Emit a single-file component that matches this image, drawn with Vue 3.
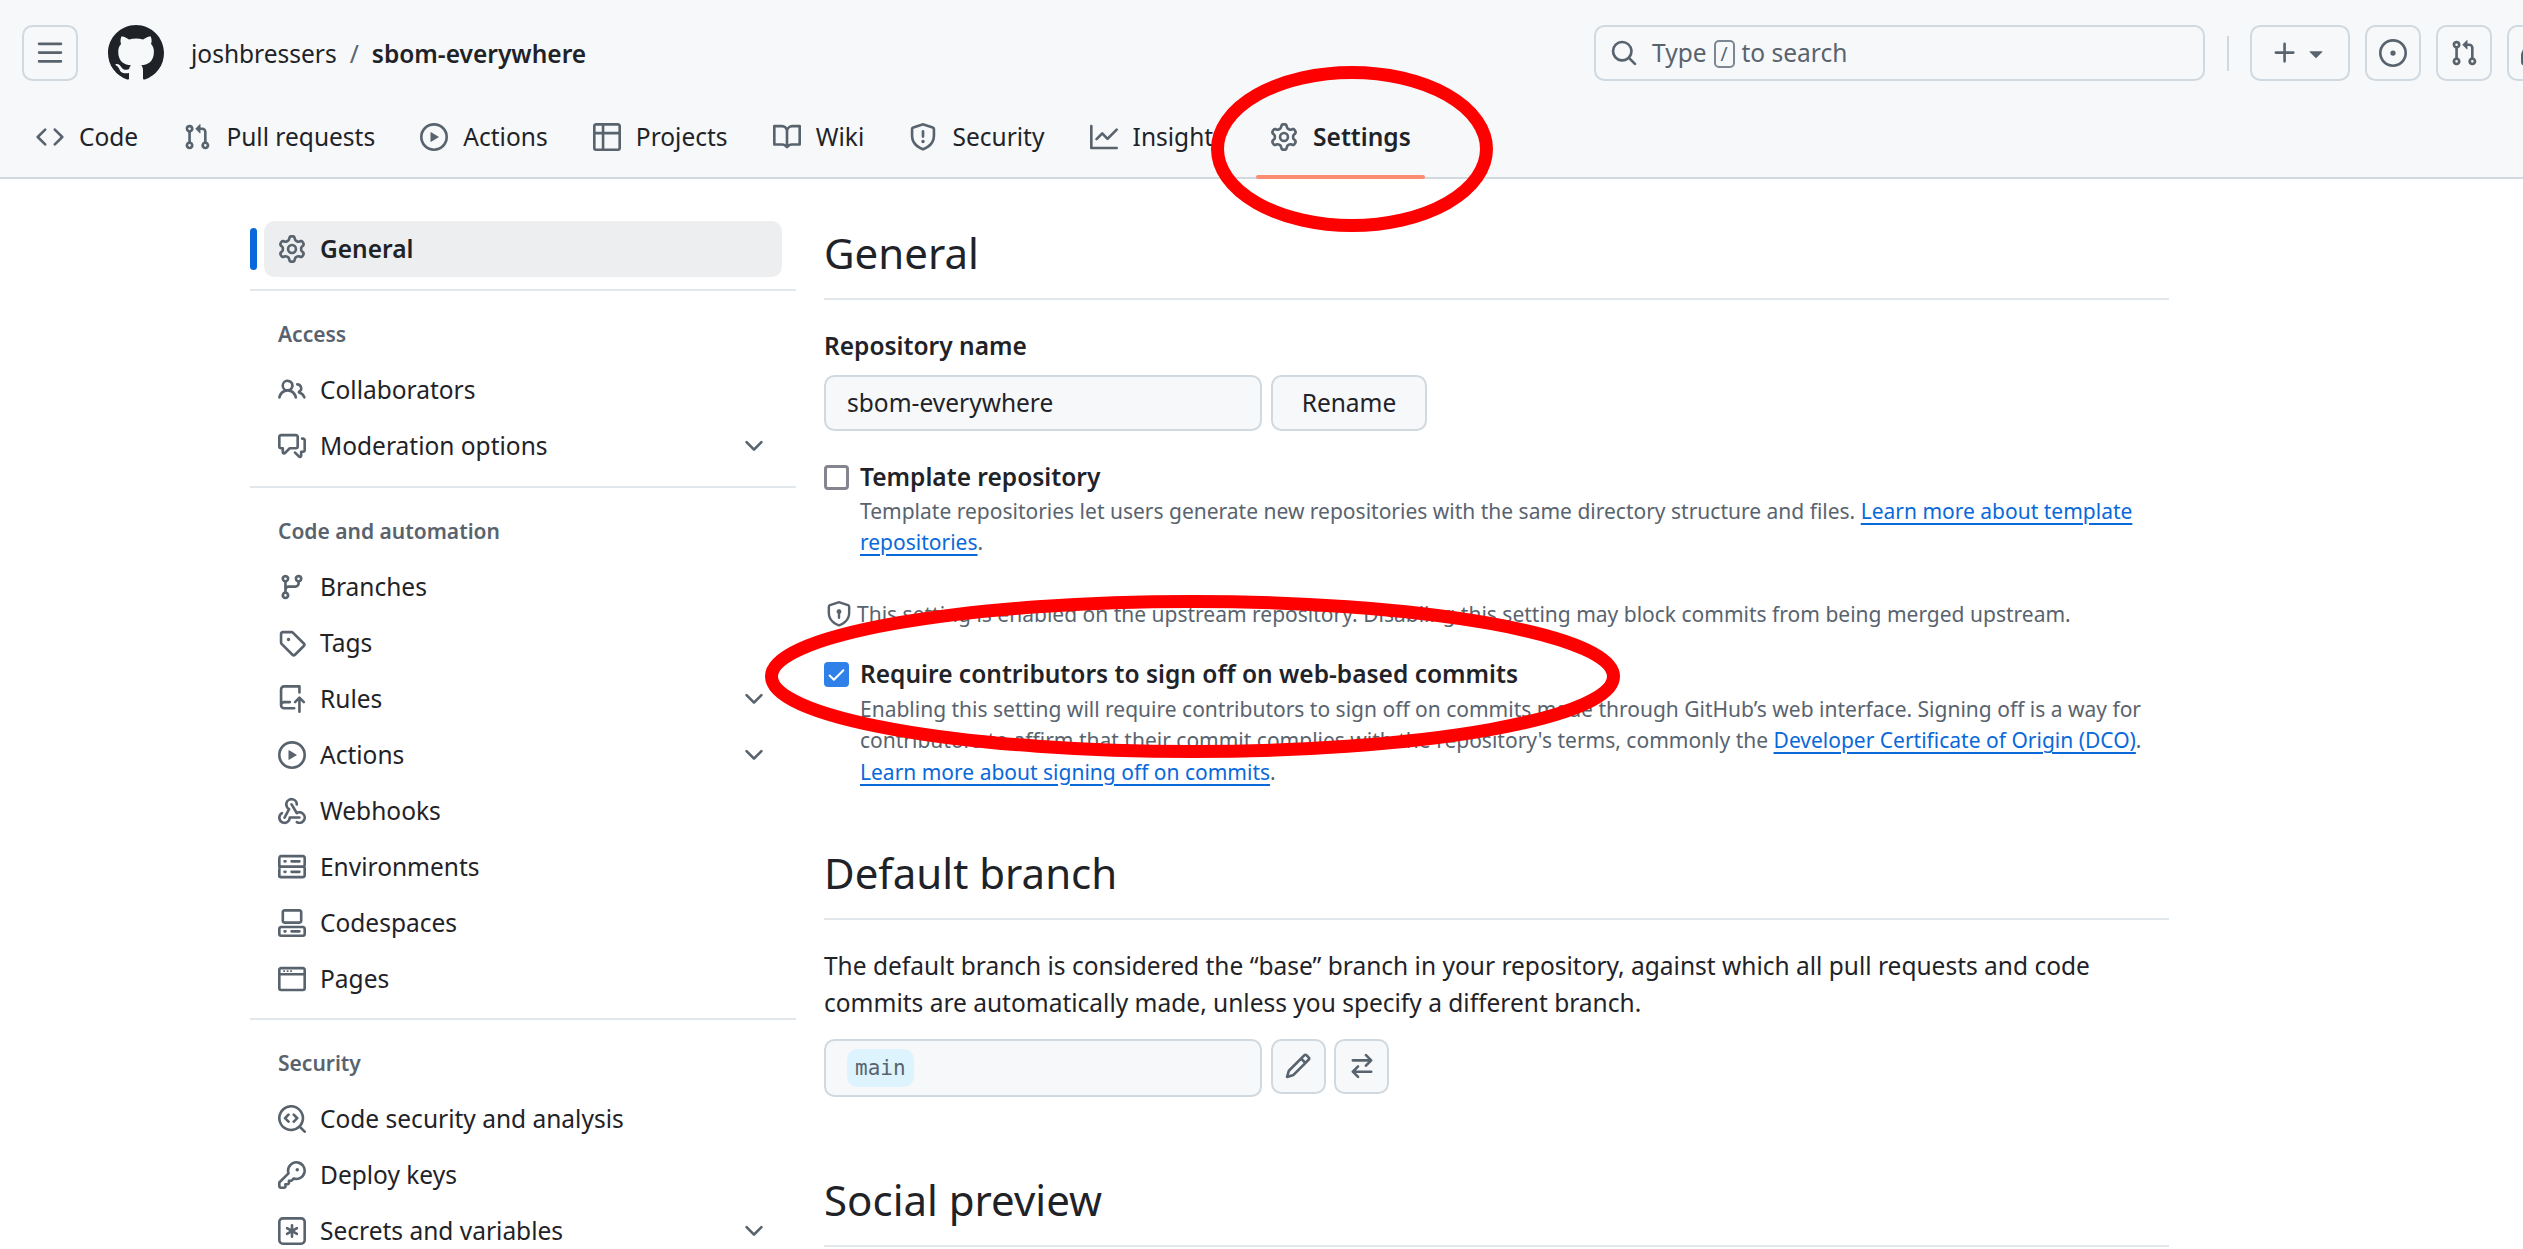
<template>
  <div class="page">
    <header class="topbar">
      <div class="top-row">
        <button class="icon-btn"><svg class="oct" viewBox="0 0 16 16"><path :d="icons.bars" /></svg></button>
        <svg class="logo" viewBox="0 0 16 16"><path :d="icons.github" /></svg>
        <div class="crumbs">
          <span>joshbressers</span>
          <span class="slash">/</span>
          <strong>sbom-everywhere</strong>
        </div>
        <div class="search">
          <svg class="oct" viewBox="0 0 16 16"><path :d="icons.search" /></svg>
          <span class="search-text"><span>Type</span><kbd>/</kbd><span>to search</span></span>
        </div>
        <span class="top-divider"></span>
        <button class="icon-btn plus-btn">
          <svg class="oct" viewBox="0 0 16 16"><path :d="icons.plus" /></svg>
          <svg class="oct" viewBox="0 0 16 16"><path :d="icons.triangle" /></svg>
        </button>
        <button class="icon-btn"><svg class="oct" viewBox="0 0 16 16"><path :d="icons.issue" /></svg></button>
        <button class="icon-btn"><svg class="oct" viewBox="0 0 16 16"><path :d="icons.pr" /></svg></button>
        <button class="icon-btn last-btn"><svg class="oct" viewBox="0 0 16 16"><path :d="icons.inbox" /></svg></button>
      </div>
      <nav class="tabs">
        <a v-for="t in tabs" :key="t.label" class="tab" :class="{ active: t.active }">
          <svg class="oct" viewBox="0 0 16 16"><path :d="icons[t.icon]" /></svg>
          <span>{{ t.label }}</span>
        </a>
      </nav>
    </header>

    <div class="layout">
      <aside class="sidebar">
        <div class="nav-item selected">
          <svg class="oct" viewBox="0 0 16 16"><path :d="icons.gear" /></svg>
          <span>General</span>
        </div>
        <section v-for="s in sections" :key="s.title" class="nav-section">
          <h3>{{ s.title }}</h3>
          <div v-for="item in s.items" :key="item.label" class="nav-item">
            <svg class="oct" viewBox="0 0 16 16"><path :d="icons[item.icon]" /></svg>
            <span>{{ item.label }}</span>
            <svg v-if="item.more" class="oct chevron" viewBox="0 0 16 16"><path :d="icons.chevron" /></svg>
          </div>
        </section>
      </aside>

      <main class="content">
        <h2>General</h2>
        <label class="field-label">Repository name</label>
        <div class="field-row">
          <div class="input">sbom-everywhere</div>
          <button class="btn">Rename</button>
        </div>

        <div class="check-row template-row">
          <span class="box"></span>
          <span class="check-title">Template repository</span>
        </div>
        <div class="note template-note">
          <div>Template repositories let users generate new repositories with the same directory structure and files. <a>Learn more about template</a></div>
          <div><a>repositories</a>.</div>
        </div>

        <div class="note upstream">
          <svg class="oct" viewBox="0 0 16 16"><path :d="icons.shieldLock" /></svg>
          <span>This setting is enabled on the upstream repository. Disabling this setting may block commits from being merged upstream.</span>
        </div>

        <div class="check-row signoff-row">
          <span class="box checked"><svg viewBox="0 0 16 16"><path :d="icons.check" /></svg></span>
          <span class="check-title">Require contributors to sign off on web-based commits</span>
        </div>
        <div class="note">
          <div>Enabling this setting will require contributors to sign off on commits made through GitHub’s web interface. Signing off is a way for</div>
          <div>contributors to affirm that their commit complies with the repository's terms, commonly the <a>Developer Certificate of Origin (DCO)</a>.</div>
          <div><a>Learn more about signing off on commits</a>.</div>
        </div>

        <h2 class="next-heading">Default branch</h2>
        <div class="body-text">
          <div>The default branch is considered the “base” branch in your repository, against which all pull requests and code</div>
          <div>commits are automatically made, unless you specify a different branch.</div>
        </div>
        <div class="branch-row">
          <div class="input branch-input"><code>main</code></div>
          <button class="btn square"><svg class="oct" viewBox="0 0 16 16"><path :d="icons.pencil" /></svg></button>
          <button class="btn square"><svg class="oct" viewBox="0 0 16 16"><path :d="icons.swap" /></svg></button>
        </div>

        <h2 class="social-heading">Social preview</h2>
      </main>
    </div>

    <!-- red hand-drawn annotations on top of the screenshot -->
    <svg class="marks" width="2523" height="1249">
      <ellipse cx="1352" cy="149" rx="134.5" ry="76.5" />
      <ellipse cx="1192.5" cy="676.5" rx="421" ry="75" />
    </svg>
  </div>
</template>

<script setup>
const icons = {
  bars: 'M1 2.75A.75.75 0 0 1 1.75 2h12.5a.75.75 0 0 1 0 1.5H1.75A.75.75 0 0 1 1 2.75Zm0 5A.75.75 0 0 1 1.75 7h12.5a.75.75 0 0 1 0 1.5H1.75A.75.75 0 0 1 1 7.75ZM1.75 12h12.5a.75.75 0 0 1 0 1.5H1.75a.75.75 0 0 1 0-1.5Z',
  github: 'M8 0c4.42 0 8 3.58 8 8a8.013 8.013 0 0 1-5.45 7.59c-.4.08-.55-.17-.55-.38 0-.27.01-1.13.01-2.2 0-.75-.25-1.23-.54-1.48 1.78-.2 3.65-.88 3.65-3.95 0-.88-.31-1.59-.82-2.15.08-.2.36-1.02-.08-2.12 0 0-.67-.22-2.2.82-.64-.18-1.32-.27-2-.27-.68 0-1.36.09-2 .27-1.53-1.03-2.2-.82-2.2-.82-.44 1.1-.16 1.92-.08 2.12-.51.56-.82 1.28-.82 2.15 0 3.06 1.86 3.75 3.64 3.95-.23.2-.44.55-.51 1.07-.46.21-1.61.55-2.33-.66-.15-.24-.6-.83-1.23-.82-.67.01-.27.38.01.53.34.19.73.9.82 1.13.16.45.68 1.31 2.69.94 0 .67.01 1.3.01 1.49 0 .21-.15.45-.55.37A7.995 7.995 0 0 1 0 8c0-4.42 3.58-8 8-8Z',
  search: 'M10.68 11.74a6 6 0 0 1-7.922-8.982 6 6 0 0 1 8.982 7.922l3.04 3.04a.749.749 0 0 1-.326 1.275.749.749 0 0 1-.734-.215ZM11.5 7a4.499 4.499 0 1 0-8.997 0A4.499 4.499 0 0 0 11.5 7Z',
  plus: 'M7.75 2a.75.75 0 0 1 .75.75V7h4.25a.75.75 0 0 1 0 1.5H8.5v4.25a.75.75 0 0 1-1.5 0V8.5H2.75a.75.75 0 0 1 0-1.5H7V2.75A.75.75 0 0 1 7.75 2Z',
  triangle: 'm4.427 7.427 3.396 3.396a.25.25 0 0 0 .354 0l3.396-3.396A.25.25 0 0 0 11.396 7H4.604a.25.25 0 0 0-.177.427Z',
  issue: 'M8 9.5a1.5 1.5 0 1 0 0-3 1.5 1.5 0 0 0 0 3ZM8 0a8 8 0 1 1 0 16A8 8 0 0 1 8 0ZM1.5 8a6.5 6.5 0 1 0 13 0 6.5 6.5 0 0 0-13 0Z',
  pr: 'M1.5 3.25a2.25 2.25 0 1 1 3 2.122v5.256a2.251 2.251 0 1 1-1.5 0V5.372A2.25 2.25 0 0 1 1.5 3.25Zm5.677-.177L9.573.677A.25.25 0 0 1 10 .854V2.5h1A2.5 2.5 0 0 1 13.5 5v5.628a2.251 2.251 0 1 1-1.5 0V5a1 1 0 0 0-1-1h-1v1.646a.25.25 0 0 1-.427.177L7.177 3.427a.25.25 0 0 1 0-.354ZM3.75 2.5a.75.75 0 1 0 0 1.5.75.75 0 0 0 0-1.5Zm0 9.5a.75.75 0 1 0 0 1.5.75.75 0 0 0 0-1.5Zm8.25.75a.75.75 0 1 0 1.5 0 .75.75 0 0 0-1.5 0Z',
  inbox: 'M2.8 2.06A1.75 1.75 0 0 1 4.41 1h7.18c.7 0 1.333.417 1.61 1.06l2.74 6.395c.04.093.06.194.06.295v4.5A1.75 1.75 0 0 1 14.25 15H1.75A1.75 1.75 0 0 1 0 13.25v-4.5c0-.101.02-.202.06-.295Zm1.61.44a.25.25 0 0 0-.23.152L1.887 8H4.75a.75.75 0 0 1 .6.3L6.625 10h2.75l1.275-1.7a.75.75 0 0 1 .6-.3h2.863L11.82 2.652a.25.25 0 0 0-.23-.152Zm10.09 7h-2.875l-1.275 1.7a.75.75 0 0 1-.6.3h-3.5a.75.75 0 0 1-.6-.3L4.375 9.5H1.5v3.75c0 .138.112.25.25.25h12.5a.25.25 0 0 0 .25-.25Z',
  code: 'm11.28 3.22 4.25 4.25a.75.75 0 0 1 0 1.06l-4.25 4.25a.749.749 0 0 1-1.275-.326.749.749 0 0 1 .215-.734L13.94 8l-3.72-3.72a.749.749 0 0 1 .326-1.275.749.749 0 0 1 .734.215Zm-6.56 0a.751.751 0 0 1 1.042.018.751.751 0 0 1 .018 1.042L2.06 8l3.72 3.72a.749.749 0 0 1-.326 1.275.749.749 0 0 1-.734-.215L.47 8.53a.75.75 0 0 1 0-1.06Z',
  play: 'M8 0a8 8 0 1 1 0 16A8 8 0 0 1 8 0ZM1.5 8a6.5 6.5 0 1 0 13 0 6.5 6.5 0 0 0-13 0Zm4.879-2.773 4.264 2.559a.25.25 0 0 1 0 .428l-4.264 2.559A.25.25 0 0 1 6 10.559V5.442a.25.25 0 0 1 .379-.215Z',
  table: 'M0 1.75C0 .784.784 0 1.75 0h12.5C15.216 0 16 .784 16 1.75v12.5A1.75 1.75 0 0 1 14.25 16H1.75A1.75 1.75 0 0 1 0 14.25ZM6.5 6.5v8h7.75a.25.25 0 0 0 .25-.25V6.5Zm8-1.5V1.75a.25.25 0 0 0-.25-.25H6.5V5Zm-13 1.5v7.75c0 .138.112.25.25.25H5v-8ZM5 5V1.5H1.75a.25.25 0 0 0-.25.25V5Z',
  book: 'M0 1.75A.75.75 0 0 1 .75 1h4.253c1.227 0 2.317.59 3 1.501A3.743 3.743 0 0 1 11.006 1h4.245a.75.75 0 0 1 .75.75v10.5a.75.75 0 0 1-.75.75h-4.507a2.25 2.25 0 0 0-1.591.659l-.622.621a.75.75 0 0 1-1.06 0l-.622-.621A2.25 2.25 0 0 0 5.258 13H.75a.75.75 0 0 1-.75-.75Zm7.251 10.324.004-5.073-.002-2.253A2.25 2.25 0 0 0 5.003 2.5H1.5v9h3.757a3.75 3.75 0 0 1 1.994.574ZM8.755 4.75l-.004 7.322a3.752 3.752 0 0 1 1.992-.572H14.5v-9h-3.495a2.25 2.25 0 0 0-2.25 2.25Z',
  shield: 'M7.467.133a1.748 1.748 0 0 1 1.066 0l5.25 1.68A1.75 1.75 0 0 1 15 3.48V7c0 1.566-.32 3.182-1.303 4.682-.983 1.498-2.585 2.813-5.032 3.855a1.697 1.697 0 0 1-1.33 0c-2.447-1.042-4.049-2.357-5.032-3.855C1.32 10.182 1 8.566 1 7V3.48a1.75 1.75 0 0 1 1.217-1.667Zm.61 1.429a.25.25 0 0 0-.153 0l-5.25 1.68a.25.25 0 0 0-.174.238V7c0 1.358.275 2.666 1.057 3.86.784 1.194 2.121 2.34 4.366 3.297a.196.196 0 0 0 .154 0c2.245-.956 3.582-2.104 4.366-3.298C13.225 9.666 13.5 8.36 13.5 7V3.48a.251.251 0 0 0-.174-.237l-5.25-1.68ZM8.75 4.75v3a.75.75 0 0 1-1.5 0v-3a.75.75 0 0 1 1.5 0ZM9 10.5a1 1 0 1 1-2 0 1 1 0 0 1 2 0Z',
  shieldLock: 'M7.467.133a1.748 1.748 0 0 1 1.066 0l5.25 1.68A1.75 1.75 0 0 1 15 3.48V7c0 1.566-.32 3.182-1.303 4.682-.983 1.498-2.585 2.813-5.032 3.855a1.697 1.697 0 0 1-1.33 0c-2.447-1.042-4.049-2.357-5.032-3.855C1.32 10.182 1 8.566 1 7V3.48a1.75 1.75 0 0 1 1.217-1.667Zm.61 1.429a.25.25 0 0 0-.153 0l-5.25 1.68a.25.25 0 0 0-.174.238V7c0 1.358.275 2.666 1.057 3.86.784 1.194 2.121 2.34 4.366 3.297a.196.196 0 0 0 .154 0c2.245-.956 3.582-2.104 4.366-3.298C13.225 9.666 13.5 8.36 13.5 7V3.48a.251.251 0 0 0-.174-.237l-5.25-1.68ZM9.5 6.5c0 .536-.286 1.032-.75 1.3v2.45a.75.75 0 0 1-1.5 0V7.8A1.5 1.5 0 1 1 9.5 6.5Z',
  graph: 'M1.5 1.75V13.5h13.75a.75.75 0 0 1 0 1.5H.75a.75.75 0 0 1-.75-.75V1.75a.75.75 0 0 1 1.5 0Zm14.28 2.53-5.25 5.25a.75.75 0 0 1-1.06 0L7 7.06 4.28 9.78a.751.751 0 0 1-1.042-.018.751.751 0 0 1-.018-1.042l3.25-3.25a.75.75 0 0 1 1.06 0L10 7.94l4.72-4.72a.751.751 0 0 1 1.042.018.751.751 0 0 1 .018 1.042Z',
  gear: 'M8 0a8.2 8.2 0 0 1 .701.031C9.444.095 9.99.645 10.16 1.29l.288 1.107c.018.066.079.158.212.224.231.114.454.243.668.386.123.082.233.09.299.071l1.103-.303c.644-.176 1.392.021 1.82.63.27.385.506.792.704 1.218.315.675.111 1.422-.364 1.891l-.814.806c-.049.048-.098.147-.088.294.016.257.016.515 0 .772-.01.147.038.246.088.294l.814.806c.475.469.679 1.216.364 1.891a7.977 7.977 0 0 1-.704 1.217c-.428.61-1.176.807-1.82.63l-1.102-.302c-.067-.019-.177-.011-.3.071a5.909 5.909 0 0 1-.668.386c-.133.066-.194.158-.211.224l-.29 1.106c-.168.646-.715 1.196-1.458 1.26a8.006 8.006 0 0 1-1.402 0c-.743-.064-1.289-.614-1.458-1.26l-.289-1.106c-.018-.066-.079-.158-.212-.224a5.738 5.738 0 0 1-.668-.386c-.123-.082-.233-.09-.299-.071l-1.103.303c-.644.176-1.392-.021-1.82-.63a8.12 8.12 0 0 1-.704-1.218c-.315-.675-.111-1.422.363-1.891l.815-.806c.05-.048.098-.147.088-.294a6.214 6.214 0 0 1 0-.772c.01-.147-.038-.246-.088-.294l-.815-.806C.635 6.045.431 5.298.746 4.623a7.92 7.92 0 0 1 .704-1.217c.428-.61 1.176-.807 1.82-.63l1.102.302c.067.019.177.011.3-.071.214-.143.437-.272.668-.386.133-.066.194-.158.211-.224l.29-1.106C6.009.645 6.556.095 7.299.03 7.53.01 7.764 0 8 0Zm-.571 1.525c-.036.003-.108.036-.137.146l-.289 1.105c-.147.561-.549.967-.998 1.189-.173.086-.34.183-.5.29-.417.278-.97.423-1.529.27l-1.103-.303c-.109-.03-.175.016-.195.045-.22.312-.412.644-.573.99-.014.031-.021.11.059.19l.815.806c.411.406.562.957.53 1.456a4.709 4.709 0 0 0 0 .582c.032.499-.119 1.05-.53 1.456l-.815.806c-.081.08-.073.159-.059.19.162.346.353.677.573.989.02.03.085.076.195.046l1.102-.303c.56-.153 1.113-.008 1.53.27.161.107.328.204.501.29.447.222.85.629.997 1.189l.289 1.105c.029.109.101.143.137.146a6.6 6.6 0 0 0 1.142 0c.036-.003.108-.036.137-.146l.289-1.105c.147-.561.549-.967.998-1.189.173-.086.34-.183.5-.29.417-.278.97-.423 1.529-.27l1.103.303c.109.029.175-.016.195-.045.22-.313.411-.644.573-.99.014-.031.021-.11-.059-.19l-.815-.806c-.411-.406-.562-.957-.53-1.456a4.709 4.709 0 0 0 0-.582c-.032-.499.119-1.05.53-1.456l.815-.806c.081-.08.073-.159.059-.19a6.464 6.464 0 0 0-.573-.989c-.02-.03-.085-.076-.195-.046l-1.102.303c-.56.153-1.113.008-1.53-.27a4.44 4.44 0 0 0-.501-.29c-.447-.222-.85-.629-.997-1.189l-.289-1.105c-.029-.11-.101-.143-.137-.146a6.6 6.6 0 0 0-1.142 0ZM11 8a3 3 0 1 1-6 0 3 3 0 0 1 6 0ZM9.5 8a1.5 1.5 0 1 0-3.001.001A1.5 1.5 0 0 0 9.5 8Z',
  people: 'M2 5.5a3.5 3.5 0 1 1 5.898 2.549 5.508 5.508 0 0 1 3.034 4.084.75.75 0 1 1-1.482.235 4 4 0 0 0-7.9 0 .75.75 0 0 1-1.482-.236A5.507 5.507 0 0 1 3.102 8.05 3.493 3.493 0 0 1 2 5.5ZM11 4a3.001 3.001 0 0 1 2.22 5.018 5.01 5.01 0 0 1 2.56 3.012.749.749 0 0 1-.885.954.752.752 0 0 1-.549-.514 3.507 3.507 0 0 0-2.522-2.372.75.75 0 0 1-.574-.73v-.352a.75.75 0 0 1 .416-.672A1.5 1.5 0 0 0 11 5.5.75.75 0 0 1 11 4Zm-5.5-.5a2 2 0 1 0-.001 3.999A2 2 0 0 0 5.5 3.5Z',
  discussion: 'M1.75 1h8.5c.966 0 1.75.784 1.75 1.75v5.5A1.75 1.75 0 0 1 10.25 10H7.061l-2.574 2.573A1.458 1.458 0 0 1 2 11.543V10h-.25A1.75 1.75 0 0 1 0 8.25v-5.5C0 1.784.784 1 1.75 1ZM1.5 2.75v5.5c0 .138.112.25.25.25h1a.75.75 0 0 1 .75.75v2.19l2.72-2.72a.749.749 0 0 1 .53-.22h3.5a.25.25 0 0 0 .25-.25v-5.5a.25.25 0 0 0-.25-.25h-8.5a.25.25 0 0 0-.25.25Zm13 2a.25.25 0 0 0-.25-.25h-.5a.75.75 0 0 1 0-1.5h.5c.966 0 1.75.784 1.75 1.75v5.5A1.75 1.75 0 0 1 14.25 12H14v1.543a1.458 1.458 0 0 1-2.487 1.03L9.22 12.28a.749.749 0 0 1 .326-1.275.749.749 0 0 1 .734.215l2.22 2.22v-2.19a.75.75 0 0 1 .75-.75h1a.25.25 0 0 0 .25-.25Z',
  chevron: 'M12.78 5.22a.749.749 0 0 1 0 1.06l-4.25 4.25a.749.749 0 0 1-1.06 0L3.22 6.28a.749.749 0 1 1 1.06-1.06L8 8.939l3.72-3.719a.749.749 0 0 1 1.06 0Z',
  branch: 'M9.5 3.25a2.25 2.25 0 1 1 3 2.122V6A2.5 2.5 0 0 1 10 8.5H6a1 1 0 0 0-1 1v1.128a2.251 2.251 0 1 1-1.5 0V5.372a2.25 2.25 0 1 1 1.5 0v1.836A2.493 2.493 0 0 1 6 7h4a1 1 0 0 0 1-1v-.628A2.25 2.25 0 0 1 9.5 3.25Zm-6 0a.75.75 0 1 0 1.5 0 .75.75 0 0 0-1.5 0Zm8.25-.75a.75.75 0 1 0 0 1.5.75.75 0 0 0 0-1.5ZM4.25 12a.75.75 0 1 0 0 1.5.75.75 0 0 0 0-1.5Z',
  tag: 'M1 7.775V2.75C1 1.784 1.784 1 2.75 1h5.025c.464 0 .91.184 1.238.513l6.25 6.25a1.75 1.75 0 0 1 0 2.474l-5.026 5.026a1.75 1.75 0 0 1-2.474 0l-6.25-6.25A1.752 1.752 0 0 1 1 7.775Zm1.5 0c0 .066.026.13.073.177l6.25 6.25a.25.25 0 0 0 .354 0l5.025-5.025a.25.25 0 0 0 0-.354l-6.25-6.25a.25.25 0 0 0-.177-.073H2.75a.25.25 0 0 0-.25.25ZM6 5a1 1 0 1 1 0 2 1 1 0 0 1 0-2Z',
  repoPush: 'M1 2.5A2.5 2.5 0 0 1 3.5 0h8.75a.75.75 0 0 1 .75.75v3.5a.75.75 0 0 1-1.5 0V1.5h-8a1 1 0 0 0-1 1v6.708A2.493 2.493 0 0 1 3.5 9h3.25a.75.75 0 0 1 0 1.5H3.5a1 1 0 0 0 0 2h5.75a.75.75 0 0 1 0 1.5H3.5A2.5 2.5 0 0 1 1 11.5Zm13.23 7.79h-.001l-1.224-1.224v6.184a.75.75 0 0 1-1.5 0V9.066L10.28 10.29a.75.75 0 0 1-1.06-1.061l2.505-2.504a.75.75 0 0 1 1.06 0L15.29 9.23a.751.751 0 0 1-.018 1.042.751.751 0 0 1-1.042.018Z',
  webhook: 'M5.5 4.25a2.25 2.25 0 0 1 4.5 0 .75.75 0 0 0 1.5 0 3.75 3.75 0 1 0-6.14 2.889l-2.272 4.258a.75.75 0 0 0 1.324.706L7 7.25a.75.75 0 0 0-.309-1.015A2.25 2.25 0 0 1 5.5 4.25ZM7.364 3.607a.75.75 0 0 1 1.03.257l2.608 4.349a3.75 3.75 0 1 1-.628 6.785.75.75 0 0 1 .752-1.299 2.25 2.25 0 1 0-.033-3.88.75.75 0 0 1-1.03-.256L7.107 4.636a.75.75 0 0 1 .257-1.03ZM2.9 8.776A.75.75 0 0 1 2.625 9.8 2.25 2.25 0 1 0 6 11.75a.75.75 0 0 1 .75-.751h5.5a.75.75 0 0 1 0 1.5H7.425a3.751 3.751 0 1 1-5.55-3.998.75.75 0 0 1 1.024.274Z',
  server: 'M1.75 1h12.5c.966 0 1.75.784 1.75 1.75v4c0 .372-.116.717-.314 1 .198.283.314.628.314 1v4a1.75 1.75 0 0 1-1.75 1.75H1.75A1.75 1.75 0 0 1 0 13.75v-4c0-.372.116-.717.314-1a1.739 1.739 0 0 1-.314-1v-4C0 1.784.784 1 1.75 1ZM1.5 2.75v4c0 .138.112.25.25.25h12.5a.25.25 0 0 0 .25-.25v-4a.25.25 0 0 0-.25-.25H1.75a.25.25 0 0 0-.25.25Zm.25 5.75a.25.25 0 0 0-.25.25v4c0 .138.112.25.25.25h12.5a.25.25 0 0 0 .25-.25v-4a.25.25 0 0 0-.25-.25ZM7 4.75A.75.75 0 0 1 7.75 4h4.5a.75.75 0 0 1 0 1.5h-4.5A.75.75 0 0 1 7 4.75ZM7.75 10h4.5a.75.75 0 0 1 0 1.5h-4.5a.75.75 0 0 1 0-1.5ZM3 4.75A.75.75 0 0 1 3.75 4h.5a.75.75 0 0 1 0 1.5h-.5A.75.75 0 0 1 3 4.75ZM3.75 10h.5a.75.75 0 0 1 0 1.5h-.5a.75.75 0 0 1 0-1.5Z',
  codespaces: 'M0 11.25c0-.966.784-1.75 1.75-1.75h12.5c.966 0 1.75.784 1.75 1.75v3A1.75 1.75 0 0 1 14.25 16H1.75A1.75 1.75 0 0 1 0 14.25Zm2-9.5C2 .784 2.784 0 3.75 0h8.5C13.216 0 14 .784 14 1.75v5a1.75 1.75 0 0 1-1.75 1.75h-8.5A1.75 1.75 0 0 1 2 6.75Zm1.75-.25a.25.25 0 0 0-.25.25v5c0 .138.112.25.25.25h8.5a.25.25 0 0 0 .25-.25v-5a.25.25 0 0 0-.25-.25Zm-2 9.5a.25.25 0 0 0-.25.25v3c0 .138.112.25.25.25h12.5a.25.25 0 0 0 .25-.25v-3a.25.25 0 0 0-.25-.25ZM7 12.75a.75.75 0 0 1 .75-.75h4.5a.75.75 0 0 1 0 1.5h-4.5a.75.75 0 0 1-.75-.75Zm-4 0a.75.75 0 0 1 .75-.75h.5a.75.75 0 0 1 0 1.5h-.5a.75.75 0 0 1-.75-.75Z',
  browser: 'M0 2.75C0 1.784.784 1 1.75 1h12.5c.966 0 1.75.784 1.75 1.75v10.5A1.75 1.75 0 0 1 14.25 15H1.75A1.75 1.75 0 0 1 0 13.25ZM14.5 6h-13v7.25c0 .138.112.25.25.25h12.5a.25.25 0 0 0 .25-.25ZM14.5 4.5V2.75a.25.25 0 0 0-.25-.25H1.75a.25.25 0 0 0-.25.25V4.5ZM3 3h1v1H3ZM5 3h1v1H5ZM7 3h1v1H7Z',
  codescan: 'M8.47 4.97a.75.75 0 0 0 0 1.06L9.94 7.5 8.47 8.97a.75.75 0 1 0 1.06 1.06l2-2a.75.75 0 0 0 0-1.06l-2-2a.75.75 0 0 0-1.06 0ZM6.53 6.03a.75.75 0 0 0-1.06-1.06l-2 2a.75.75 0 0 0 0 1.06l2 2a.75.75 0 1 0 1.06-1.06L5.06 7.5l1.47-1.47ZM12.246 13.307a7.501 7.501 0 1 1 1.06-1.06l2.474 2.473a.749.749 0 0 1-.326 1.275.749.749 0 0 1-.734-.215ZM1.5 7.5a6.002 6.002 0 0 0 3.608 5.504 6.002 6.002 0 0 0 6.486-1.117.748.748 0 0 1 .292-.293A6 6 0 1 0 1.5 7.5Z',
  key: 'M10.5 0a5.499 5.499 0 1 1-1.288 10.848l-.932.932a.749.749 0 0 1-.53.22H7v.75a.749.749 0 0 1-.22.53l-.5.5a.749.749 0 0 1-.53.22H5v.75a.749.749 0 0 1-.22.53l-.5.5a.749.749 0 0 1-.53.22h-2A1.75 1.75 0 0 1 0 14.25v-2c0-.199.079-.389.22-.53l4.932-4.932A5.5 5.5 0 0 1 10.5 0Zm-4 5.5c-.001.431.069.86.205 1.269a.75.75 0 0 1-.181.768L1.5 12.56v1.69c0 .138.112.25.25.25h1.69l.06-.06v-1.19a.75.75 0 0 1 .75-.75h1.19l.06-.06v-1.19a.75.75 0 0 1 .75-.75h1.19l1.023-1.025a.75.75 0 0 1 .768-.18A4 4 0 1 0 6.5 5.5ZM11 6a1 1 0 1 1 0-2 1 1 0 0 1 0 2Z',
  asterisk: 'M0 2.75A2.75 2.75 0 0 1 2.75 0h10.5A2.75 2.75 0 0 1 16 2.75v10.5A2.75 2.75 0 0 1 13.25 16H2.75A2.75 2.75 0 0 1 0 13.25ZM2.75 1.5c-.69 0-1.25.56-1.25 1.25v10.5c0 .69.56 1.25 1.25 1.25h10.5c.69 0 1.25-.56 1.25-1.25V2.75c0-.69-.56-1.25-1.25-1.25ZM8 4a.75.75 0 0 1 .75.75V6.7l1.69-.975a.75.75 0 0 1 .75 1.3L9.5 8l1.69.976a.75.75 0 0 1-.75 1.298L8.75 9.3v1.951a.75.75 0 0 1-1.5 0V9.299l-1.69.976a.75.75 0 0 1-.75-1.3L6.5 8l-1.69-.975a.75.75 0 0 1 .75-1.3l1.69.976V4.75A.75.75 0 0 1 8 4Z',
  pencil: 'M11.013 1.427a1.75 1.75 0 0 1 2.474 0l1.086 1.086a1.75 1.75 0 0 1 0 2.474l-8.61 8.61c-.21.21-.47.364-.756.445l-3.251.93a.75.75 0 0 1-.927-.928l.929-3.25c.081-.286.235-.547.445-.758l8.61-8.61Zm.176 4.823L9.75 4.81l-6.286 6.287a.253.253 0 0 0-.064.108l-.558 1.953 1.953-.558a.253.253 0 0 0 .108-.064Zm1.238-3.763a.25.25 0 0 0-.354 0L10.811 3.75l1.439 1.44 1.263-1.263a.25.25 0 0 0 0-.354Z',
  swap: 'M5.22 14.78a.75.75 0 0 0 1.06-1.06L4.56 12h8.69a.75.75 0 0 0 0-1.5H4.56l1.72-1.72a.75.75 0 0 0-1.06-1.06l-3 3a.75.75 0 0 0 0 1.06l3 3Zm5.56-6.5a.75.75 0 1 1-1.06-1.06l1.72-1.72H2.75a.75.75 0 0 1 0-1.5h8.69L9.72 2.28a.75.75 0 0 1 1.06-1.06l3 3a.75.75 0 0 1 0 1.06l-3 3Z',
  check: 'M13.78 4.22a.75.75 0 0 1 0 1.06l-7.25 7.25a.75.75 0 0 1-1.06 0L2.22 9.28a.751.751 0 0 1 .018-1.042.751.751 0 0 1 1.042-.018L6 10.94l6.72-6.72a.75.75 0 0 1 1.06 0Z',
}

const tabs = [
  { label: 'Code', icon: 'code' },
  { label: 'Pull requests', icon: 'pr' },
  { label: 'Actions', icon: 'play' },
  { label: 'Projects', icon: 'table' },
  { label: 'Wiki', icon: 'book' },
  { label: 'Security', icon: 'shield' },
  { label: 'Insights', icon: 'graph' },
  { label: 'Settings', icon: 'gear', active: true },
]

const sections = [
  {
    title: 'Access',
    items: [
      { label: 'Collaborators', icon: 'people' },
      { label: 'Moderation options', icon: 'discussion', more: true },
    ],
  },
  {
    title: 'Code and automation',
    items: [
      { label: 'Branches', icon: 'branch' },
      { label: 'Tags', icon: 'tag' },
      { label: 'Rules', icon: 'repoPush', more: true },
      { label: 'Actions', icon: 'play', more: true },
      { label: 'Webhooks', icon: 'webhook' },
      { label: 'Environments', icon: 'server' },
      { label: 'Codespaces', icon: 'codespaces' },
      { label: 'Pages', icon: 'browser' },
    ],
  },
  {
    title: 'Security',
    items: [
      { label: 'Code security and analysis', icon: 'codescan' },
      { label: 'Deploy keys', icon: 'key' },
      { label: 'Secrets and variables', icon: 'asterisk', more: true },
    ],
  },
]
</script>

<style>
html,
body {
  margin: 0;
  overflow: hidden;
  background: #fff;
}
</style>

<style scoped>
.page {
  position: relative;
  width: 2523px;
  height: 1249px;
  overflow: hidden;
  background: #fff;
  color: #1f2328;
  font-family: "Noto Sans", sans-serif;
  font-size: 24.5px;
  line-height: 1.5;
}

.oct {
  width: 28px;
  height: 28px;
  flex: none;
  fill: #59636e;
}

.topbar {
  height: 179px;
  box-sizing: border-box;
  background: #f6f8fa;
  border-bottom: 2px solid #d1d9e0;
}

.top-row {
  display: flex;
  align-items: center;
  height: 56px;
  padding: 25px 0 0 22px;
}

.icon-btn {
  display: flex;
  align-items: center;
  justify-content: center;
  width: 56px;
  height: 56px;
  flex: none;
  box-sizing: border-box;
  margin-left: 15px;
  padding: 0;
  background: transparent;
  border: 2px solid #d1d9e0;
  border-radius: 10.5px;
}

.top-row > .icon-btn:first-child {
  margin-left: 0;
}

.logo {
  width: 56px;
  height: 56px;
  flex: none;
  margin-left: 30px;
  fill: #1f2328;
}

.crumbs {
  display: flex;
  gap: 13px;
  margin: 2px 0 0 27px;
}

.crumbs .slash {
  color: #59636e;
}

.crumbs strong {
  font-weight: 600;
}

.search {
  display: flex;
  align-items: center;
  gap: 14px;
  width: 611px;
  height: 56px;
  box-sizing: border-box;
  margin-left: auto;
  padding-left: 14px;
  color: #59636e;
  border: 2px solid #d1d9e0;
  border-radius: 10.5px;
}

.search-text {
  display: flex;
  align-items: center;
  gap: 7px;
  padding-top: 1px;
}

.search kbd {
  display: block;
  width: 21px;
  height: 28px;
  box-sizing: border-box;
  font: inherit;
  font-size: 19px;
  line-height: 24px;
  text-align: center;
  border: 2px solid #7d8792;
  border-radius: 5px;
}

.top-divider {
  width: 2px;
  height: 35px;
  flex: none;
  margin-left: 22px;
  background: #d1d9e0;
}

.plus-btn {
  width: 100px;
  margin-left: 21px;
  gap: 3px;
}

.last-btn {
  margin-right: -40px;
}

.tabs {
  display: flex;
  gap: 17.2px;
  margin-top: 28px;
  padding-left: 22px;
}

.tab {
  position: relative;
  display: flex;
  align-items: center;
  gap: 15px;
  height: 56px;
  padding: 0 14px;
  white-space: nowrap;
}

.tab.active {
  font-weight: 600;
}

.tab.active::after {
  content: "";
  position: absolute;
  left: 0;
  right: 0;
  bottom: -14px;
  height: 4px;
  background: #fd8c73;
  border-radius: 2px;
}

.layout {
  display: flex;
  gap: 28px;
  padding: 42px 0 0 250px;
}

.sidebar {
  width: 546px;
  flex: none;
}

.nav-item {
  display: flex;
  align-items: center;
  gap: 14px;
  height: 56px;
  margin: 0 14px;
  padding: 0 14px;
}

.nav-item.selected {
  position: relative;
  font-weight: 600;
  background: #eceef0;
  border-radius: 10.5px;
}

.nav-item.selected::before {
  content: "";
  position: absolute;
  left: -14px;
  top: 7px;
  width: 7px;
  height: 42px;
  background: #0969da;
  border-radius: 4px;
}

.chevron {
  margin-left: auto;
}

.nav-section {
  margin-top: 12px;
  border-top: 2px solid #e2e7ec;
}

.nav-section:last-child {
  margin-top: 11px;
}

.nav-section h3 {
  display: flex;
  align-items: center;
  height: 71px;
  box-sizing: border-box;
  margin: 0;
  padding: 16px 0 0 28px;
  font-size: 21px;
  font-weight: 600;
  color: #59636e;
}

.content {
  width: 1345px;
  flex: none;
}

h2 {
  margin: 0;
  padding-bottom: 14px;
  font-size: 42px;
  font-weight: 400;
  line-height: 63px;
  border-bottom: 2px solid #e2e7ec;
}

.field-label {
  display: block;
  margin-top: 28px;
  font-weight: 600;
}

.field-row {
  display: flex;
  gap: 9px;
  margin-top: 10px;
}

.input {
  display: flex;
  align-items: center;
  width: 438px;
  height: 56px;
  box-sizing: border-box;
  padding: 2px 0 0 21px;
  background: #f6f8fa;
  border: 2px solid #d1d9e0;
  border-radius: 10.5px;
}

.btn {
  display: flex;
  align-items: center;
  justify-content: center;
  width: 156px;
  height: 56px;
  box-sizing: border-box;
  padding: 2px 0 0;
  color: inherit;
  font: inherit;
  background: #f6f8fa;
  border: 2px solid #d1d9e0;
  border-radius: 10.5px;
}

.btn.square {
  width: 55px;
  height: 55px;
  padding: 0;
}

.check-row {
  display: flex;
  align-items: center;
  gap: 11px;
}

.template-row {
  margin-top: 28px;
}

.signoff-row {
  margin-top: 26px;
}

.check-title {
  font-weight: 600;
}

.box {
  width: 25px;
  height: 25px;
  flex: none;
  box-sizing: border-box;
  background: #fff;
  border: 3px solid #85858f;
  border-radius: 4px;
}

.box.checked {
  display: flex;
  align-items: center;
  justify-content: center;
  background: #2f81e9;
  border: none;
}

.box.checked svg {
  width: 21px;
  height: 21px;
  fill: #fff;
}

.note {
  margin: 1px 0 0 36px;
  font-size: 21px;
  color: #59636e;
}

.template-note {
  margin-top: 0;
}

.note a {
  color: #0969da;
  text-decoration: underline;
  text-underline-offset: 4px;
}

.note.upstream {
  display: flex;
  align-items: center;
  gap: 5px;
  margin: 40px 0 0 2px;
}

.note.upstream .oct {
  width: 26px;
  height: 26px;
}

.next-heading {
  margin-top: 53px;
}

.body-text {
  margin: 28px 0 0;
}

.branch-row {
  display: flex;
  align-items: flex-start;
  gap: 8.5px;
  margin-top: 17px;
}

.branch-input {
  height: 58px;
  padding-top: 0;
}

.branch-input code {
  padding: 3px 8px;
  color: #59636e;
  font-family: "DejaVu Sans Mono", monospace;
  font-size: 21px;
  line-height: 32px;
  background: #ddf4ff;
  border-radius: 10.5px;
}

.social-heading {
  margin-top: 71px;
}

.marks {
  position: absolute;
  left: 0;
  top: 0;
  pointer-events: none;
}

.marks ellipse {
  fill: none;
  stroke: #ff0000;
  stroke-width: 13;
}
</style>
